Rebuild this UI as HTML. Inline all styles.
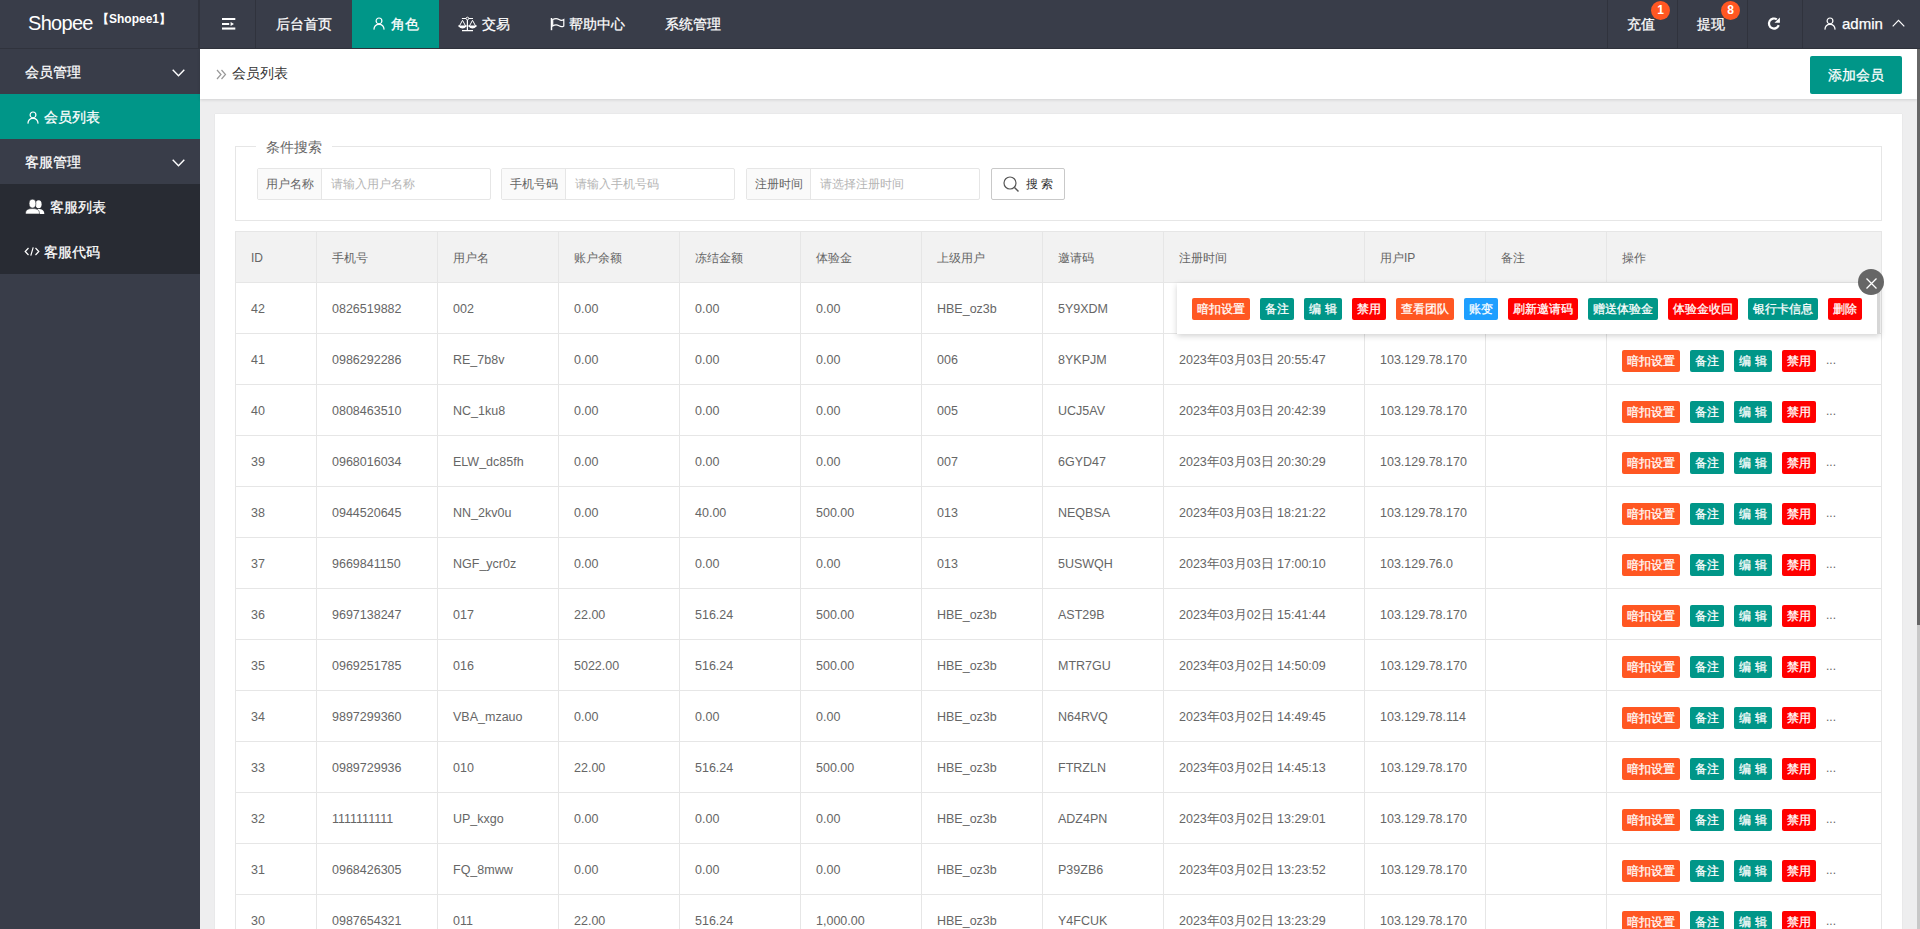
<!DOCTYPE html>
<html><head><meta charset="utf-8"><style>
*{margin:0;padding:0;box-sizing:border-box}
html,body{width:1920px;height:929px;overflow:hidden}
body{-webkit-font-smoothing:antialiased;font-family:"Liberation Sans",sans-serif;background:#eeeeef;color:#666;position:relative}
.abs{position:absolute}
.header{position:absolute;left:0;top:0;width:1920px;height:49px;background:#393D49;border-bottom:1px solid #30333d}
.logo1{position:absolute;left:28px;top:10px;font-size:20px;color:#fff;line-height:26px;letter-spacing:-0.7px}
.logo2{position:absolute;left:97px;top:9px;font-size:12px;color:#fff;font-weight:bold;line-height:20px}
.vsep{position:absolute;top:0;width:1px;height:48px;background:#30333d}
.nav{position:absolute;top:0;height:48px;line-height:48px;font-size:14px;color:#fff;white-space:nowrap}
.sel{background:#009688}
.badge{position:absolute;top:0.5px;width:19px;height:19px;border-radius:50%;background:#FF5722;color:#fff;font-size:12px;font-weight:bold;line-height:19px;text-align:center}
.side{position:absolute;left:0;top:49px;width:200px;height:880px;background:#393D49}
.side .it{position:absolute;left:0;width:200px;height:45px;line-height:47px;font-size:14px;color:#fff}
.side .dk{background:#282B33}
.main{position:absolute;left:200px;top:49px;width:1717px;height:880px;background:#eeeeef}
.crumb{position:absolute;left:0;top:0;width:1717px;height:50px;background:#fff;box-shadow:0 1px 3px rgba(0,0,0,.12)}
.crumb .t{position:absolute;left:32px;top:0;line-height:48px;font-size:14px;color:#333}
.addbtn{position:absolute;left:1610px;top:7px;width:92px;height:38px;line-height:38px;background:#009688;color:#fff;font-size:14px;text-align:center;border-radius:2px}
.card{position:absolute;left:15px;top:65px;width:1687px;height:900px;background:#fff;box-shadow:0 0 1px rgba(0,0,0,.12)}
.fs{position:absolute;left:20px;top:32px;width:1647px;height:75px;border:1px solid #e6e6e6}
.legend{position:absolute;left:20px;top:-10px;padding:0 10px;background:#fff;font-size:14px;color:#666;line-height:20px}
.ig{position:absolute;top:54px;height:32px;border:1px solid #e6e6e6;border-radius:2px;background:#fff}
.ig .lb{position:absolute;left:0;top:0;width:64px;height:30px;background:#fafafa;border-right:1px solid #e6e6e6;font-size:12px;color:#666;line-height:30px;padding-left:8px}
.ig .ph{position:absolute;left:73px;top:0;line-height:30px;font-size:12px;color:#b5b5b5}
.sbtn{position:absolute;top:54px;height:32px;border:1px solid #c9c9c9;border-radius:2px;background:#fff;font-size:12px;color:#333;line-height:30px}
.tbl{position:absolute;left:20px;top:117px;width:1647px;height:800px}
.th{position:absolute;left:0;width:1647px;background:#f2f2f2;border-top:1px solid #e6e6e6}
.hc{position:absolute;font-size:12px;color:#666;white-space:nowrap}
.c{position:absolute;font-size:12.5px;color:#666;white-space:nowrap}
.hl{position:absolute;left:0;width:1647px;height:1px;background:#e6e6e6}
.vl{position:absolute;top:0;width:1px;height:800px;background:#e6e6e6}
.ops{position:absolute;left:1387px;display:flex;align-items:center;white-space:nowrap}
.b{display:inline-block;height:22px;line-height:22px;padding:0 5px;font-size:12px;color:#fff;border-radius:2px;margin-right:10px}
.o{background:#FF5722}.g{background:#009688}.r{background:#FF0000}.bl{background:#1E9FFF}
.more{font-size:12px;color:#666;line-height:22px;position:relative;top:-1px}
.pop{position:absolute;left:1177px;top:283px;width:703px;height:51px;background:#fff;box-shadow:0 2px 6px rgba(0,0,0,.18);display:flex;align-items:center;padding-left:15px;white-space:nowrap}
.pop .sb{position:absolute;right:0;top:0;width:3px;height:51px;background:#d6d6d6}
.close{position:absolute;left:1858px;top:269px;width:26px;height:26px;border-radius:50%;background:#666}
.scroll{position:absolute;left:1917px;top:49px;width:3px;height:880px;background:#c8c8c8}
.thumb{position:absolute;left:1917px;top:49px;width:3px;height:576px;background:#666}
.sp{display:inline-block;width:4px}
.nav,.side .it,.addbtn,.b{-webkit-text-stroke:0.25px #fff}

</style></head><body>
<div class="header">
  <div class="logo1">Shopee</div>
  <div class="logo2">【Shopee1】</div>
  <div class="vsep" style="left:198px;width:2px"></div>
  <div class="vsep" style="left:255px"></div>
  <svg class="abs" style="left:222px;top:18px" width="14" height="12" viewBox="0 0 14 12"><rect x="0" y="0" width="13.3" height="2" fill="#fff"/><rect x="0" y="5" width="7.2" height="2" fill="#fff"/><path d="M8.6 4 L12 6 L8.6 8 Z" fill="#fff"/><rect x="0" y="9.5" width="13.3" height="2.1" fill="#fff"/></svg>
  <div class="nav" style="left:276px">后台首页</div>
  <div class="nav sel" style="left:352px;width:87px"></div>
  <svg class="abs" style="left:373px;top:17px" width="12" height="13" viewBox="0 0 12 13"><circle cx="6" cy="3.9" r="2.9" fill="none" stroke="#fff" stroke-width="1.2"/><path d="M0.9 12.6 C1.1 9 3.3 7.3 6 7.3 C8.7 7.3 10.9 9 11.1 12.6" fill="none" stroke="#fff" stroke-width="1.2"/></svg>
  <div class="nav" style="left:391px">角色</div>
  <svg class="abs" style="left:458px;top:16px" width="19" height="16" viewBox="0 0 19 16"><path d="M3.9 2.5 H8 M10.8 2.5 H15 M9.4 3.9 V14.6 M4 14.6 H15" stroke="#fff" stroke-width="1.2" fill="none"/><circle cx="9.4" cy="2.5" r="1.3" stroke="#fff" stroke-width="1" fill="none"/><path d="M1.3 10.2 L4.5 4.3 L7.7 10.2 M11.3 10.2 L14.5 4.3 L17.7 10.2" stroke="#fff" stroke-width="1" fill="none"/><path d="M0.9 10 Q4.5 13.8 8.1 10 Z M10.9 10 Q14.5 13.8 18.1 10 Z" stroke="#fff" stroke-width="1.1" fill="#fff"/></svg>
  <div class="nav" style="left:482px">交易</div>
  <svg class="abs" style="left:549px;top:16px" width="17" height="16" viewBox="0 0 17 16"><path d="M2.5 2 V14.2" stroke="#fff" stroke-width="1.5"/><path d="M3.7 3.6 C6 2.3 8 2.3 10 3.5 C12 4.7 13.5 4.5 14.8 3.6 V9.9 C13.5 10.8 12 11 10 9.8 C8 8.6 6 8.6 3.7 9.9 Z" stroke="#fff" stroke-width="1.2" fill="none"/></svg>
  <div class="nav" style="left:569px">帮助中心</div>
  <div class="nav" style="left:665px">系统管理</div>

  <div class="vsep" style="left:1607px"></div>
  <div class="vsep" style="left:1677px"></div>
  <div class="vsep" style="left:1747px"></div>
  <div class="vsep" style="left:1802px"></div>
  <div class="nav" style="left:1627px">充值</div>
  <div class="badge" style="left:1651px">1</div>
  <div class="nav" style="left:1697px">提现</div>
  <div class="badge" style="left:1721px">8</div>
  <svg class="abs" style="left:1766px;top:16px" width="16" height="16" viewBox="0 0 16 16"><path d="M12.7 9.2 A5 5 0 1 1 10.8 3.4" fill="none" stroke="#fff" stroke-width="2.2"/><path d="M13.9 1.4 L13.9 6.8 L8.5 6.8 Z" fill="#fff"/></svg>
  <svg class="abs" style="left:1824px;top:17px" width="12" height="13" viewBox="0 0 12 13"><circle cx="6" cy="3.9" r="2.9" fill="none" stroke="#fff" stroke-width="1.2"/><path d="M0.9 12.6 C1.1 9 3.3 7.3 6 7.3 C8.7 7.3 10.9 9 11.1 12.6" fill="none" stroke="#fff" stroke-width="1.2"/></svg>
  <div class="nav" style="left:1842px;font-size:15px">admin</div>
  <svg class="abs" style="left:1892px;top:19px" width="13" height="8" viewBox="0 0 13 8"><path d="M0.7 7.3 L6.5 1.4 L12.3 7.3" fill="none" stroke="#fff" stroke-width="1.2"/></svg>
</div>

<div class="side">
  <div class="it" style="top:0"><span class="abs" style="left:25px">会员管理</span></div>
  <svg class="abs" style="left:172px;top:20px" width="13" height="8" viewBox="0 0 13 8"><path d="M0.7 0.7 L6.5 6.8 L12.3 0.7" fill="none" stroke="#fff" stroke-width="1.4"/></svg>
  <div class="it sel" style="top:45px"><span class="abs" style="left:44px">会员列表</span></div>
  <svg class="abs" style="left:27px;top:62px" width="12" height="13" viewBox="0 0 12 13"><circle cx="6" cy="3.9" r="2.9" fill="none" stroke="#fff" stroke-width="1.2"/><path d="M0.9 12.6 C1.1 9 3.3 7.3 6 7.3 C8.7 7.3 10.9 9 11.1 12.6" fill="none" stroke="#fff" stroke-width="1.2"/></svg>
  <div class="it" style="top:90px"><span class="abs" style="left:25px">客服管理</span></div>
  <svg class="abs" style="left:172px;top:110px" width="13" height="8" viewBox="0 0 13 8"><path d="M0.7 0.7 L6.5 6.8 L12.3 0.7" fill="none" stroke="#fff" stroke-width="1.4"/></svg>
  <div class="it dk" style="top:135px"><span class="abs" style="left:50px">客服列表</span></div>
  <svg class="abs" style="left:25px;top:150px" width="20" height="16" viewBox="0 0 20 16"><ellipse cx="13.6" cy="5.3" rx="3" ry="4" fill="#fff"/><path d="M11 15 C11 11.5 11.5 10 13.6 10 C16.5 10 19.3 11 19.3 15 Z" fill="#fff"/><ellipse cx="7.5" cy="4.6" rx="3.4" ry="4.4" fill="#fff" stroke="#282B33" stroke-width="0.6"/><path d="M0.5 15 C0.5 11 2.5 9.6 7.5 9.6 C12.5 9.6 14.5 11 14.5 15 Z" fill="#fff" stroke="#282B33" stroke-width="0.6"/></svg>
  <div class="it dk" style="top:180px"><span class="abs" style="left:44px">客服代码</span></div>
  <svg class="abs" style="left:24px;top:198px" width="16" height="9" viewBox="0 0 16 9"><path d="M4.5 1 L1.2 4.5 L4.5 8 M11.5 1 L14.8 4.5 L11.5 8 M9.2 0.3 L6.8 8.7" fill="none" stroke="#fff" stroke-width="1.2"/></svg>
</div>

<div class="main">
  <div class="crumb">
    <svg class="abs" style="left:16px;top:20px" width="11" height="11" viewBox="0 0 11 11"><path d="M1 1 L5 5.5 L1 10 M5.5 1 L9.5 5.5 L5.5 10" fill="none" stroke="#999" stroke-width="1.2"/></svg>
    <div class="t">会员列表</div>
    <div class="addbtn">添加会员</div>
  </div>
  <div class="card">
    <div class="fs">
      <div class="legend">条件搜索</div>
    </div>
    <div class="ig" style="left:42px;width:234px"><div class="lb">用户名称</div><div class="ph">请输入用户名称</div></div>
    <div class="ig" style="left:286px;width:234px"><div class="lb">手机号码</div><div class="ph">请输入手机号码</div></div>
    <div class="ig" style="left:531px;width:234px"><div class="lb">注册时间</div><div class="ph">请选择注册时间</div></div>
    <div class="sbtn" style="left:776px;width:74px">
      <svg class="abs" style="left:11px;top:7px" width="17" height="17" viewBox="0 0 17 17"><circle cx="7" cy="7" r="6" fill="none" stroke="#555" stroke-width="1.2"/><path d="M11.5 11.5 L15.5 15.5" stroke="#555" stroke-width="1.5"/></svg>
      <span class="abs" style="left:34px">搜 索</span>
    </div>
    <div class="tbl">
<div class="th" style="top:0;height:51px"></div>
<div class="hc" style="left:16px;top:2px;height:51px;line-height:51px">ID</div>
<div class="hc" style="left:97px;top:2px;height:51px;line-height:51px">手机号</div>
<div class="hc" style="left:218px;top:2px;height:51px;line-height:51px">用户名</div>
<div class="hc" style="left:339px;top:2px;height:51px;line-height:51px">账户余额</div>
<div class="hc" style="left:460px;top:2px;height:51px;line-height:51px">冻结金额</div>
<div class="hc" style="left:581px;top:2px;height:51px;line-height:51px">体验金</div>
<div class="hc" style="left:702px;top:2px;height:51px;line-height:51px">上级用户</div>
<div class="hc" style="left:823px;top:2px;height:51px;line-height:51px">邀请码</div>
<div class="hc" style="left:944px;top:2px;height:51px;line-height:51px">注册时间</div>
<div class="hc" style="left:1145px;top:2px;height:51px;line-height:51px">用户IP</div>
<div class="hc" style="left:1266px;top:2px;height:51px;line-height:51px">备注</div>
<div class="hc" style="left:1387px;top:2px;height:51px;line-height:51px">操作</div>
<div class="hl" style="top:51px"></div>
<div class="c" style="left:16px;top:53px;height:50px;line-height:50px">42</div>
<div class="c" style="left:97px;top:53px;height:50px;line-height:50px">0826519882</div>
<div class="c" style="left:218px;top:53px;height:50px;line-height:50px">002</div>
<div class="c" style="left:339px;top:53px;height:50px;line-height:50px">0.00</div>
<div class="c" style="left:460px;top:53px;height:50px;line-height:50px">0.00</div>
<div class="c" style="left:581px;top:53px;height:50px;line-height:50px">0.00</div>
<div class="c" style="left:702px;top:53px;height:50px;line-height:50px">HBE_oz3b</div>
<div class="c" style="left:823px;top:53px;height:50px;line-height:50px">5Y9XDM</div>
<div class="hl" style="top:102px"></div>
<div class="c" style="left:16px;top:104px;height:50px;line-height:50px">41</div>
<div class="c" style="left:97px;top:104px;height:50px;line-height:50px">0986292286</div>
<div class="c" style="left:218px;top:104px;height:50px;line-height:50px">RE_7b8v</div>
<div class="c" style="left:339px;top:104px;height:50px;line-height:50px">0.00</div>
<div class="c" style="left:460px;top:104px;height:50px;line-height:50px">0.00</div>
<div class="c" style="left:581px;top:104px;height:50px;line-height:50px">0.00</div>
<div class="c" style="left:702px;top:104px;height:50px;line-height:50px">006</div>
<div class="c" style="left:823px;top:104px;height:50px;line-height:50px">8YKPJM</div>
<div class="c" style="left:944px;top:104px;height:50px;line-height:50px">2023年03月03日 20:55:47</div>
<div class="c" style="left:1145px;top:104px;height:50px;line-height:50px">103.129.78.170</div>
<div class="ops" style="top:105px;height:50px"><span class="b o">暗扣设置</span><span class="b g">备注</span><span class="b g">编<i class="sp"></i>辑</span><span class="b r">禁用</span><span class="more">...</span></div>
<div class="hl" style="top:153px"></div>
<div class="c" style="left:16px;top:155px;height:50px;line-height:50px">40</div>
<div class="c" style="left:97px;top:155px;height:50px;line-height:50px">0808463510</div>
<div class="c" style="left:218px;top:155px;height:50px;line-height:50px">NC_1ku8</div>
<div class="c" style="left:339px;top:155px;height:50px;line-height:50px">0.00</div>
<div class="c" style="left:460px;top:155px;height:50px;line-height:50px">0.00</div>
<div class="c" style="left:581px;top:155px;height:50px;line-height:50px">0.00</div>
<div class="c" style="left:702px;top:155px;height:50px;line-height:50px">005</div>
<div class="c" style="left:823px;top:155px;height:50px;line-height:50px">UCJ5AV</div>
<div class="c" style="left:944px;top:155px;height:50px;line-height:50px">2023年03月03日 20:42:39</div>
<div class="c" style="left:1145px;top:155px;height:50px;line-height:50px">103.129.78.170</div>
<div class="ops" style="top:156px;height:50px"><span class="b o">暗扣设置</span><span class="b g">备注</span><span class="b g">编<i class="sp"></i>辑</span><span class="b r">禁用</span><span class="more">...</span></div>
<div class="hl" style="top:204px"></div>
<div class="c" style="left:16px;top:206px;height:50px;line-height:50px">39</div>
<div class="c" style="left:97px;top:206px;height:50px;line-height:50px">0968016034</div>
<div class="c" style="left:218px;top:206px;height:50px;line-height:50px">ELW_dc85fh</div>
<div class="c" style="left:339px;top:206px;height:50px;line-height:50px">0.00</div>
<div class="c" style="left:460px;top:206px;height:50px;line-height:50px">0.00</div>
<div class="c" style="left:581px;top:206px;height:50px;line-height:50px">0.00</div>
<div class="c" style="left:702px;top:206px;height:50px;line-height:50px">007</div>
<div class="c" style="left:823px;top:206px;height:50px;line-height:50px">6GYD47</div>
<div class="c" style="left:944px;top:206px;height:50px;line-height:50px">2023年03月03日 20:30:29</div>
<div class="c" style="left:1145px;top:206px;height:50px;line-height:50px">103.129.78.170</div>
<div class="ops" style="top:207px;height:50px"><span class="b o">暗扣设置</span><span class="b g">备注</span><span class="b g">编<i class="sp"></i>辑</span><span class="b r">禁用</span><span class="more">...</span></div>
<div class="hl" style="top:255px"></div>
<div class="c" style="left:16px;top:257px;height:50px;line-height:50px">38</div>
<div class="c" style="left:97px;top:257px;height:50px;line-height:50px">0944520645</div>
<div class="c" style="left:218px;top:257px;height:50px;line-height:50px">NN_2kv0u</div>
<div class="c" style="left:339px;top:257px;height:50px;line-height:50px">0.00</div>
<div class="c" style="left:460px;top:257px;height:50px;line-height:50px">40.00</div>
<div class="c" style="left:581px;top:257px;height:50px;line-height:50px">500.00</div>
<div class="c" style="left:702px;top:257px;height:50px;line-height:50px">013</div>
<div class="c" style="left:823px;top:257px;height:50px;line-height:50px">NEQBSA</div>
<div class="c" style="left:944px;top:257px;height:50px;line-height:50px">2023年03月03日 18:21:22</div>
<div class="c" style="left:1145px;top:257px;height:50px;line-height:50px">103.129.78.170</div>
<div class="ops" style="top:258px;height:50px"><span class="b o">暗扣设置</span><span class="b g">备注</span><span class="b g">编<i class="sp"></i>辑</span><span class="b r">禁用</span><span class="more">...</span></div>
<div class="hl" style="top:306px"></div>
<div class="c" style="left:16px;top:308px;height:50px;line-height:50px">37</div>
<div class="c" style="left:97px;top:308px;height:50px;line-height:50px">9669841150</div>
<div class="c" style="left:218px;top:308px;height:50px;line-height:50px">NGF_ycr0z</div>
<div class="c" style="left:339px;top:308px;height:50px;line-height:50px">0.00</div>
<div class="c" style="left:460px;top:308px;height:50px;line-height:50px">0.00</div>
<div class="c" style="left:581px;top:308px;height:50px;line-height:50px">0.00</div>
<div class="c" style="left:702px;top:308px;height:50px;line-height:50px">013</div>
<div class="c" style="left:823px;top:308px;height:50px;line-height:50px">5USWQH</div>
<div class="c" style="left:944px;top:308px;height:50px;line-height:50px">2023年03月03日 17:00:10</div>
<div class="c" style="left:1145px;top:308px;height:50px;line-height:50px">103.129.76.0</div>
<div class="ops" style="top:309px;height:50px"><span class="b o">暗扣设置</span><span class="b g">备注</span><span class="b g">编<i class="sp"></i>辑</span><span class="b r">禁用</span><span class="more">...</span></div>
<div class="hl" style="top:357px"></div>
<div class="c" style="left:16px;top:359px;height:50px;line-height:50px">36</div>
<div class="c" style="left:97px;top:359px;height:50px;line-height:50px">9697138247</div>
<div class="c" style="left:218px;top:359px;height:50px;line-height:50px">017</div>
<div class="c" style="left:339px;top:359px;height:50px;line-height:50px">22.00</div>
<div class="c" style="left:460px;top:359px;height:50px;line-height:50px">516.24</div>
<div class="c" style="left:581px;top:359px;height:50px;line-height:50px">500.00</div>
<div class="c" style="left:702px;top:359px;height:50px;line-height:50px">HBE_oz3b</div>
<div class="c" style="left:823px;top:359px;height:50px;line-height:50px">AST29B</div>
<div class="c" style="left:944px;top:359px;height:50px;line-height:50px">2023年03月02日 15:41:44</div>
<div class="c" style="left:1145px;top:359px;height:50px;line-height:50px">103.129.78.170</div>
<div class="ops" style="top:360px;height:50px"><span class="b o">暗扣设置</span><span class="b g">备注</span><span class="b g">编<i class="sp"></i>辑</span><span class="b r">禁用</span><span class="more">...</span></div>
<div class="hl" style="top:408px"></div>
<div class="c" style="left:16px;top:410px;height:50px;line-height:50px">35</div>
<div class="c" style="left:97px;top:410px;height:50px;line-height:50px">0969251785</div>
<div class="c" style="left:218px;top:410px;height:50px;line-height:50px">016</div>
<div class="c" style="left:339px;top:410px;height:50px;line-height:50px">5022.00</div>
<div class="c" style="left:460px;top:410px;height:50px;line-height:50px">516.24</div>
<div class="c" style="left:581px;top:410px;height:50px;line-height:50px">500.00</div>
<div class="c" style="left:702px;top:410px;height:50px;line-height:50px">HBE_oz3b</div>
<div class="c" style="left:823px;top:410px;height:50px;line-height:50px">MTR7GU</div>
<div class="c" style="left:944px;top:410px;height:50px;line-height:50px">2023年03月02日 14:50:09</div>
<div class="c" style="left:1145px;top:410px;height:50px;line-height:50px">103.129.78.170</div>
<div class="ops" style="top:411px;height:50px"><span class="b o">暗扣设置</span><span class="b g">备注</span><span class="b g">编<i class="sp"></i>辑</span><span class="b r">禁用</span><span class="more">...</span></div>
<div class="hl" style="top:459px"></div>
<div class="c" style="left:16px;top:461px;height:50px;line-height:50px">34</div>
<div class="c" style="left:97px;top:461px;height:50px;line-height:50px">9897299360</div>
<div class="c" style="left:218px;top:461px;height:50px;line-height:50px">VBA_mzauo</div>
<div class="c" style="left:339px;top:461px;height:50px;line-height:50px">0.00</div>
<div class="c" style="left:460px;top:461px;height:50px;line-height:50px">0.00</div>
<div class="c" style="left:581px;top:461px;height:50px;line-height:50px">0.00</div>
<div class="c" style="left:702px;top:461px;height:50px;line-height:50px">HBE_oz3b</div>
<div class="c" style="left:823px;top:461px;height:50px;line-height:50px">N64RVQ</div>
<div class="c" style="left:944px;top:461px;height:50px;line-height:50px">2023年03月02日 14:49:45</div>
<div class="c" style="left:1145px;top:461px;height:50px;line-height:50px">103.129.78.114</div>
<div class="ops" style="top:462px;height:50px"><span class="b o">暗扣设置</span><span class="b g">备注</span><span class="b g">编<i class="sp"></i>辑</span><span class="b r">禁用</span><span class="more">...</span></div>
<div class="hl" style="top:510px"></div>
<div class="c" style="left:16px;top:512px;height:50px;line-height:50px">33</div>
<div class="c" style="left:97px;top:512px;height:50px;line-height:50px">0989729936</div>
<div class="c" style="left:218px;top:512px;height:50px;line-height:50px">010</div>
<div class="c" style="left:339px;top:512px;height:50px;line-height:50px">22.00</div>
<div class="c" style="left:460px;top:512px;height:50px;line-height:50px">516.24</div>
<div class="c" style="left:581px;top:512px;height:50px;line-height:50px">500.00</div>
<div class="c" style="left:702px;top:512px;height:50px;line-height:50px">HBE_oz3b</div>
<div class="c" style="left:823px;top:512px;height:50px;line-height:50px">FTRZLN</div>
<div class="c" style="left:944px;top:512px;height:50px;line-height:50px">2023年03月02日 14:45:13</div>
<div class="c" style="left:1145px;top:512px;height:50px;line-height:50px">103.129.78.170</div>
<div class="ops" style="top:513px;height:50px"><span class="b o">暗扣设置</span><span class="b g">备注</span><span class="b g">编<i class="sp"></i>辑</span><span class="b r">禁用</span><span class="more">...</span></div>
<div class="hl" style="top:561px"></div>
<div class="c" style="left:16px;top:563px;height:50px;line-height:50px">32</div>
<div class="c" style="left:97px;top:563px;height:50px;line-height:50px">1111111111</div>
<div class="c" style="left:218px;top:563px;height:50px;line-height:50px">UP_kxgo</div>
<div class="c" style="left:339px;top:563px;height:50px;line-height:50px">0.00</div>
<div class="c" style="left:460px;top:563px;height:50px;line-height:50px">0.00</div>
<div class="c" style="left:581px;top:563px;height:50px;line-height:50px">0.00</div>
<div class="c" style="left:702px;top:563px;height:50px;line-height:50px">HBE_oz3b</div>
<div class="c" style="left:823px;top:563px;height:50px;line-height:50px">ADZ4PN</div>
<div class="c" style="left:944px;top:563px;height:50px;line-height:50px">2023年03月02日 13:29:01</div>
<div class="c" style="left:1145px;top:563px;height:50px;line-height:50px">103.129.78.170</div>
<div class="ops" style="top:564px;height:50px"><span class="b o">暗扣设置</span><span class="b g">备注</span><span class="b g">编<i class="sp"></i>辑</span><span class="b r">禁用</span><span class="more">...</span></div>
<div class="hl" style="top:612px"></div>
<div class="c" style="left:16px;top:614px;height:50px;line-height:50px">31</div>
<div class="c" style="left:97px;top:614px;height:50px;line-height:50px">0968426305</div>
<div class="c" style="left:218px;top:614px;height:50px;line-height:50px">FQ_8mww</div>
<div class="c" style="left:339px;top:614px;height:50px;line-height:50px">0.00</div>
<div class="c" style="left:460px;top:614px;height:50px;line-height:50px">0.00</div>
<div class="c" style="left:581px;top:614px;height:50px;line-height:50px">0.00</div>
<div class="c" style="left:702px;top:614px;height:50px;line-height:50px">HBE_oz3b</div>
<div class="c" style="left:823px;top:614px;height:50px;line-height:50px">P39ZB6</div>
<div class="c" style="left:944px;top:614px;height:50px;line-height:50px">2023年03月02日 13:23:52</div>
<div class="c" style="left:1145px;top:614px;height:50px;line-height:50px">103.129.78.170</div>
<div class="ops" style="top:615px;height:50px"><span class="b o">暗扣设置</span><span class="b g">备注</span><span class="b g">编<i class="sp"></i>辑</span><span class="b r">禁用</span><span class="more">...</span></div>
<div class="hl" style="top:663px"></div>
<div class="c" style="left:16px;top:665px;height:50px;line-height:50px">30</div>
<div class="c" style="left:97px;top:665px;height:50px;line-height:50px">0987654321</div>
<div class="c" style="left:218px;top:665px;height:50px;line-height:50px">011</div>
<div class="c" style="left:339px;top:665px;height:50px;line-height:50px">22.00</div>
<div class="c" style="left:460px;top:665px;height:50px;line-height:50px">516.24</div>
<div class="c" style="left:581px;top:665px;height:50px;line-height:50px">1,000.00</div>
<div class="c" style="left:702px;top:665px;height:50px;line-height:50px">HBE_oz3b</div>
<div class="c" style="left:823px;top:665px;height:50px;line-height:50px">Y4FCUK</div>
<div class="c" style="left:944px;top:665px;height:50px;line-height:50px">2023年03月02日 13:23:29</div>
<div class="c" style="left:1145px;top:665px;height:50px;line-height:50px">103.129.78.170</div>
<div class="ops" style="top:666px;height:50px"><span class="b o">暗扣设置</span><span class="b g">备注</span><span class="b g">编<i class="sp"></i>辑</span><span class="b r">禁用</span><span class="more">...</span></div>
<div class="vl" style="left:0px"></div>
<div class="vl" style="left:81px"></div>
<div class="vl" style="left:202px"></div>
<div class="vl" style="left:323px"></div>
<div class="vl" style="left:444px"></div>
<div class="vl" style="left:565px"></div>
<div class="vl" style="left:686px"></div>
<div class="vl" style="left:807px"></div>
<div class="vl" style="left:928px"></div>
<div class="vl" style="left:1129px"></div>
<div class="vl" style="left:1250px"></div>
<div class="vl" style="left:1371px"></div>
<div class="vl" style="left:1646px"></div>
</div>
  </div>
</div>

<div class="pop">
  <span class="b o">暗扣设置</span><span class="b g">备注</span><span class="b g">编<i class="sp"></i>辑</span><span class="b r">禁用</span><span class="b o">查看团队</span><span class="b bl">账变</span><span class="b r">刷新邀请码</span><span class="b g">赠送体验金</span><span class="b r">体验金收回</span><span class="b g">银行卡信息</span><span class="b r">删除</span>
  <div class="sb"></div>
</div>
<div class="close"><svg class="abs" style="left:7.5px;top:8.5px" width="11" height="11" viewBox="0 0 11 11"><path d="M0.5 0.5 L10.5 10.5 M10.5 0.5 L0.5 10.5" stroke="#fff" stroke-width="1.3"/></svg></div>
<div class="scroll"></div><div class="thumb"></div>

</body></html>
